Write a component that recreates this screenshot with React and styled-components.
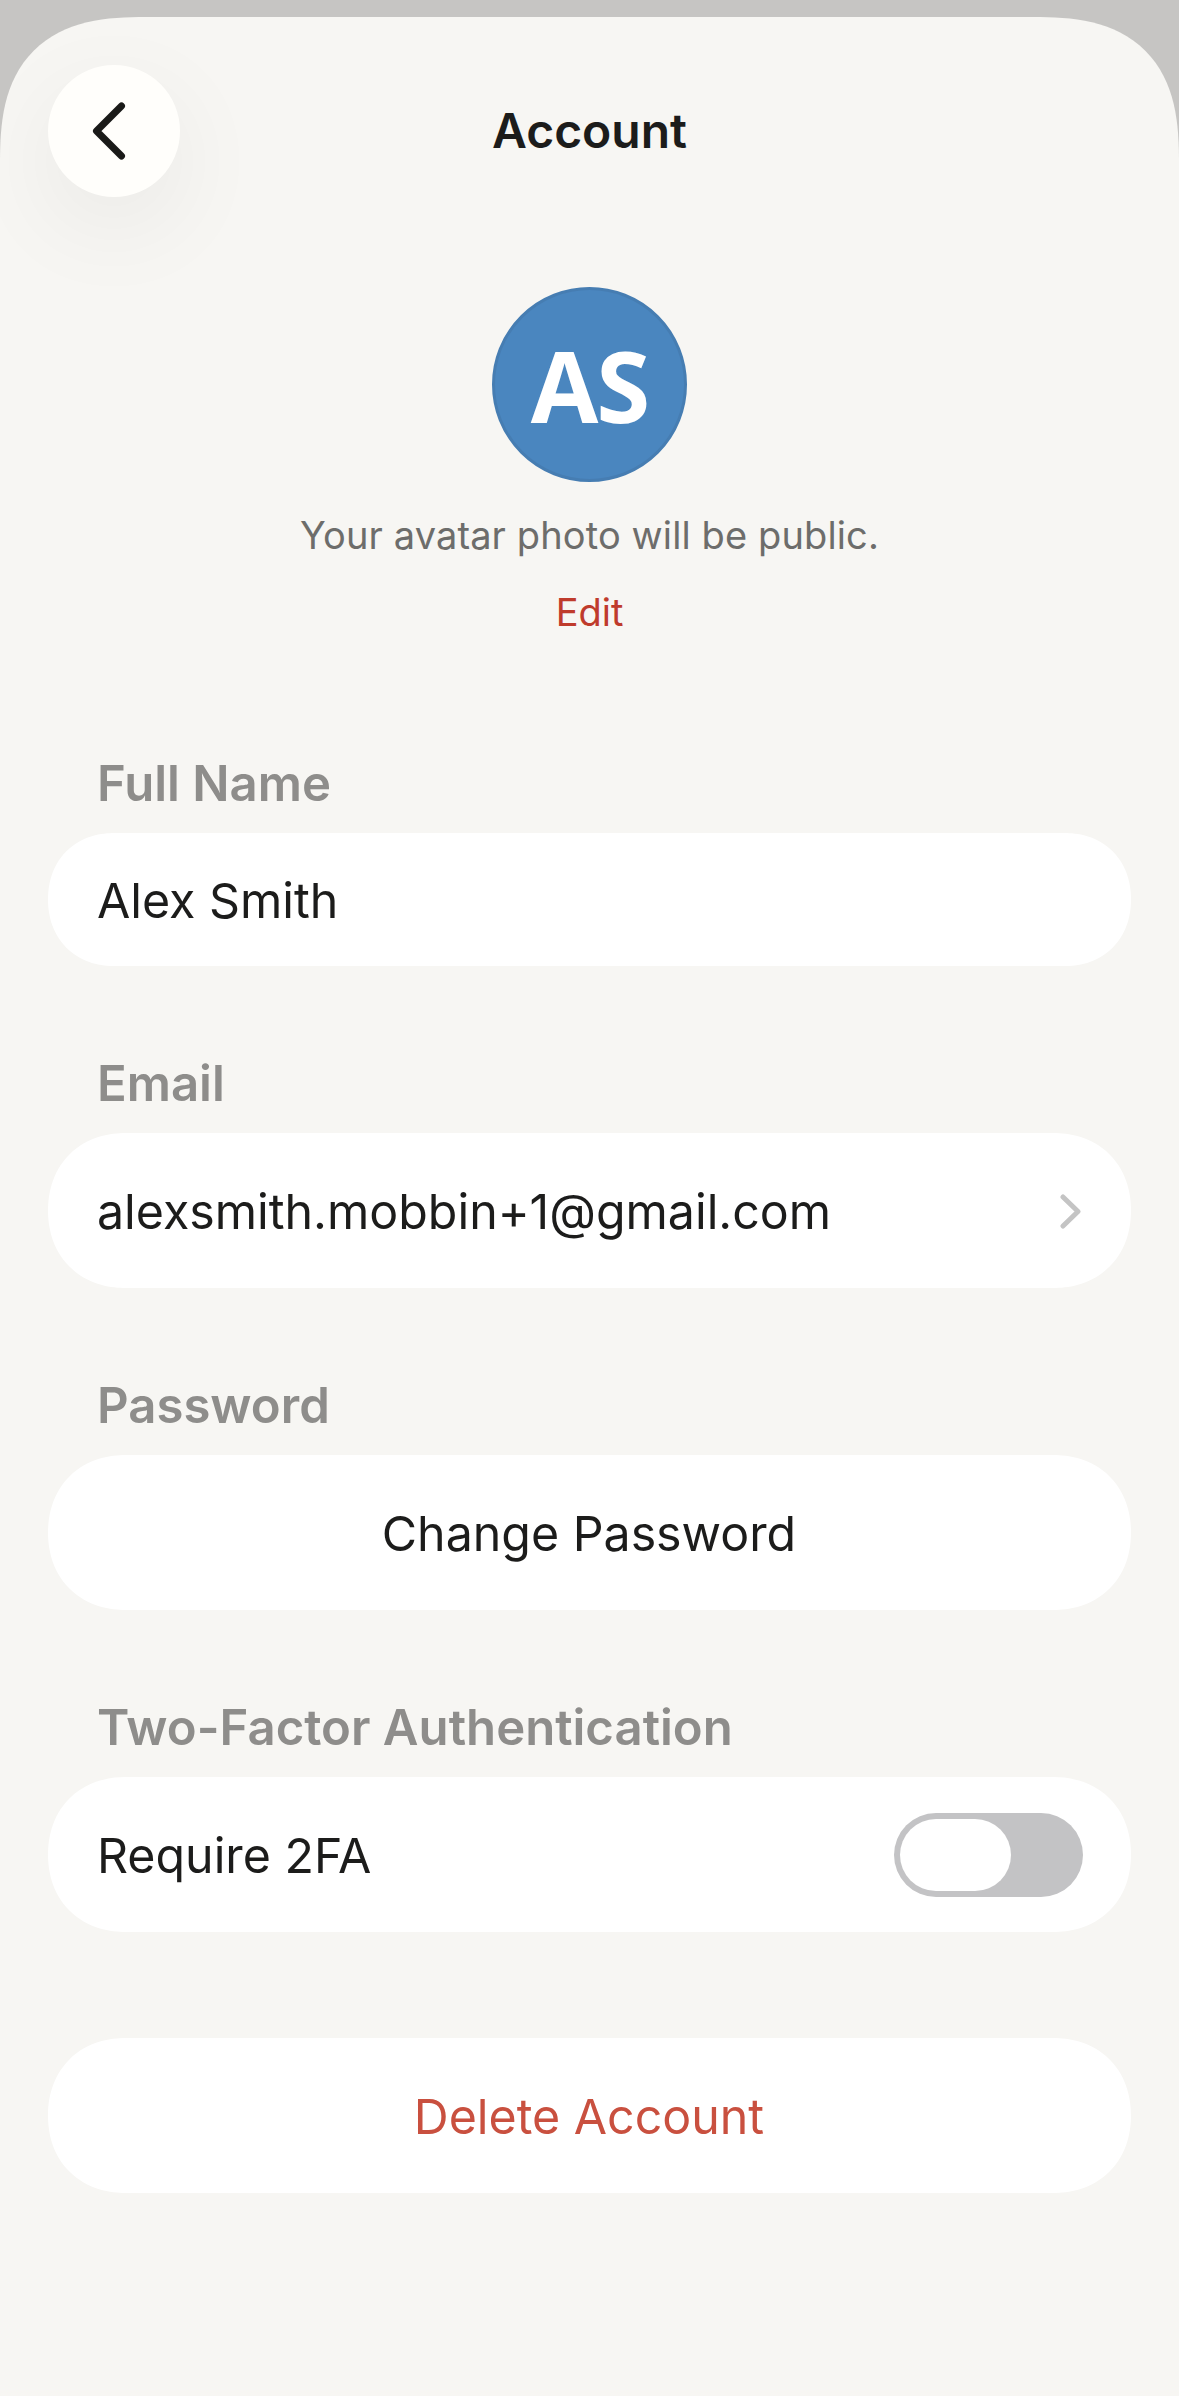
import React from 'react'
import styled, { createGlobalStyle } from 'styled-components'
import { ChevronLeft } from 'lucide-react'

const GlobalStyle = createGlobalStyle`
  html, body {
    margin: 0;
    padding: 0;
    background: #c6c5c3;
  }
  * {
    box-sizing: border-box;
  }
`

const Sheet = styled.div`
  margin-top: 17px;
  height: 2379px;
  overflow: hidden;
  background: #f7f6f3;
  border-radius: 146px 146px 0 0;
  corner-shape: superellipse(1.4);
  font-family: Inter, "Liberation Sans", sans-serif;
  color: #1c1c1b;
  padding: 48px 48px 0;
`

const Header = styled.header`
  display: grid;
  grid-template-columns: 132px 1fr 132px;
  align-items: center;
  height: 132px;
`

const BackButton = styled.button`
  width: 132px;
  height: 132px;
  padding: 0 10px 0 0;
  border: 0;
  border-radius: 50%;
  background: #fffefb;
  color: #1a1a18;
  box-shadow: 0 30px 100px rgba(0, 0, 0, 0.06);
  display: flex;
  align-items: center;
  justify-content: center;
`

const Title = styled.h1`
  margin: 0;
  text-align: center;
  font-size: 48px;
  font-weight: 600;
  line-height: 60px;
`

const AvatarBlock = styled.section`
  display: flex;
  flex-direction: column;
  align-items: center;
  margin-top: 90px;
`

const Avatar = styled.div`
  width: 195px;
  height: 195px;
  border-radius: 50%;
  background: #4a86bf;
  border: 3px solid #467db2;
  color: #fff;
  font-family: "Open Sans", sans-serif;
  font-size: 98px;
  font-weight: 700;
  letter-spacing: -2px;
  display: flex;
  align-items: center;
  justify-content: center;
`

const Hint = styled.p`
  margin: 30px 0 0;
  font-size: 38px;
  line-height: 46px;
  color: #6d6d6b;
  letter-spacing: 0.12px;
`

const EditLink = styled.a`
  margin-top: 31px;
  font-size: 38px;
  line-height: 46px;
  color: #bf3b2c;
`

const Form = styled.div`
  display: flex;
  flex-direction: column;
  margin-top: 118px;
`

const Field = styled.div`
  display: flex;
  flex-direction: column;
  margin-bottom: 87px;
`

const Label = styled.label`
  padding-left: 49px;
  margin-bottom: 20px;
  font-size: 49.1px;
  line-height: 60px;
  font-weight: 600;
  color: #8e8d8b;
`

const Row = styled.div`
  height: ${(p) => p.$height || 155}px;
  padding: 2px ${(p) => p.$padRight || 50}px 0 49px;
  border-radius: 78px;
  corner-shape: superellipse(1.1);
  background: #fff;
  font-size: 48.3px;
  display: flex;
  align-items: center;
  justify-content: ${(p) => (p.$center ? 'center' : 'space-between')};
  color: ${(p) => p.$color || '#1c1c1b'};
`

const Toggle = styled.div`
  width: 189px;
  height: 84px;
  margin-top: -2px;
  border-radius: 42px;
  padding: 6px;
  background: #c3c3c5;
  display: flex;
`

const Knob = styled.div`
  width: 111px;
  height: 72px;
  border-radius: 36px;
  background: #fff;
`

const DeleteRow = styled(Row)`
  margin-top: 19px;
`

const App = () => {
  return (
    <>
      <GlobalStyle />
      <Sheet>
        <Header>
          <BackButton aria-label="Back">
            <ChevronLeft size={100} strokeWidth={1.68} />
          </BackButton>
          <Title>Account</Title>
        </Header>

        <AvatarBlock>
          <Avatar>AS</Avatar>
          <Hint>Your avatar photo will be public.</Hint>
          <EditLink>Edit</EditLink>
        </AvatarBlock>

        <Form>
          <Field>
            <Label>Full Name</Label>
            <Row $height={133}>Alex Smith</Row>
          </Field>
          <Field>
            <Label>Email</Label>
            <Row>
              alexsmith.mobbin+1@gmail.com
              <svg width="21" height="35" viewBox="0 0 21 35" fill="none">
                <path d="M3 3 L18 17.5 L3 32" stroke="#c4c4c4" strokeWidth="5" strokeLinecap="round" strokeLinejoin="round" />
              </svg>
            </Row>
          </Field>
          <Field>
            <Label>Password</Label>
            <Row $center>Change Password</Row>
          </Field>
          <Field>
            <Label>Two-Factor Authentication</Label>
            <Row $padRight={48}>
              Require 2FA
              <Toggle>
                <Knob />
              </Toggle>
            </Row>
          </Field>
          <DeleteRow $center $color="#c9503f">Delete Account</DeleteRow>
        </Form>
      </Sheet>
    </>
  )
}

export default App
